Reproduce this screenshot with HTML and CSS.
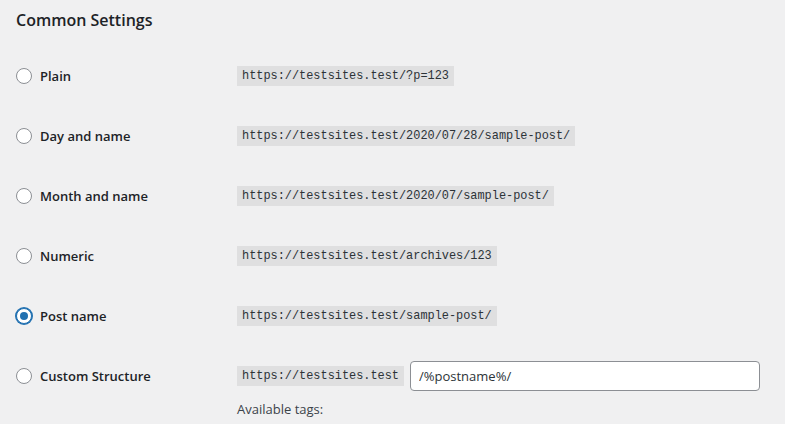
FILE: index.html
```html
<!DOCTYPE html>
<html lang="en">
<head>
    <meta charset="UTF-8">
    <meta name="viewport" content="width=device-width, initial-scale=1.0">
    <link rel="stylesheet" href="styles.css">
</head>
<body>
    <h2 class="title">Common Settings</h2>

    <div class="permalink-structure">
        <div class="row">
            <label class="choice"><input type="radio" name="selection" class="radio"> Plain</label>
            <div class="value"><code>https://testsites.test/?p=123</code></div>
        </div>
        <div class="row">
            <label class="choice"><input type="radio" name="selection" class="radio"> Day and name</label>
            <div class="value"><code>https://testsites.test/2020/07/28/sample-post/</code></div>
        </div>
        <div class="row">
            <label class="choice"><input type="radio" name="selection" class="radio"> Month and name</label>
            <div class="value"><code>https://testsites.test/2020/07/sample-post/</code></div>
        </div>
        <div class="row">
            <label class="choice"><input type="radio" name="selection" class="radio"> Numeric</label>
            <div class="value"><code>https://testsites.test/archives/123</code></div>
        </div>
        <div class="row">
            <label class="choice"><input type="radio" name="selection" class="radio" checked> Post name</label>
            <div class="value"><code>https://testsites.test/sample-post/</code></div>
        </div>
        <div class="row">
            <label class="choice"><input type="radio" name="selection" class="radio"> Custom Structure</label>
            <div class="value">
                <div class="custom-line">
                    <code>https://testsites.test</code>
                    <input type="text" class="regular-text" value="/%postname%/">
                </div>
                <p class="tags-label">Available tags:</p>
            </div>
        </div>
    </div>
</body>
</html>
```

FILE: styles.css
```css
* {
    margin: 0;
    padding: 0;
    box-sizing: border-box;
}

body {
    background: #f0f0f1;
    color: #1d2327;
    font-family: 'Open Sans', 'Noto Sans', sans-serif;
    font-size: 13px;
    padding: 0 16px;
}

.title {
    font-size: 16px;
    font-weight: 600;
    line-height: 24px;
    padding-top: 8px;
    margin-bottom: 14px;
}

/* 每一行：左侧单选，右侧示例链接 */
.row {
    display: grid;
    grid-template-columns: 221px 1fr;
    padding: 15px 0;
}

.choice {
    display: flex;
    align-items: center;
    height: 30px;
    font-size: 13px;
    font-weight: 600;
    gap: 8px;
    cursor: pointer;
}

.radio {
    appearance: none;
    width: 16px;
    height: 16px;
    border-radius: 50%;
    border: 1px solid #8c8f94;
    background: #fff;
    display: inline-flex;
    align-items: center;
    justify-content: center;
    flex-shrink: 0;
}

.radio:checked {
    border-color: #2271b1;
    box-shadow: 0 0 0 1px #2271b1;
}

.radio:checked::before {
    content: "";
    width: 8px;
    height: 8px;
    border-radius: 50%;
    background: #2271b1;
}

.value {
    display: flex;
    flex-direction: column;
    align-items: flex-start;
}

code {
    display: inline-block;
    font-family: 'Liberation Mono', 'DejaVu Sans Mono', monospace;
    font-size: 11.9px;
    line-height: 14px;
    padding: 3px 5px;
    background: rgba(0, 0, 0, 0.07);
    color: #2c3338;
    margin-top: 5px;
}

.custom-line {
    display: flex;
    align-items: center;
    gap: 6px;
}

.custom-line code {
    margin-top: 0;
}

.regular-text {
    width: 350px;
    height: 30px;
    border: 1px solid #8c8f94;
    border-radius: 4px;
    background: #fff;
    padding: 0 8px;
    font-family: 'Open Sans', 'Noto Sans', sans-serif;
    font-size: 13px;
    color: #2c3338;
}

.tags-label {
    margin-top: 9px;
    font-size: 13px;
    color: #3c434a;
}
```
